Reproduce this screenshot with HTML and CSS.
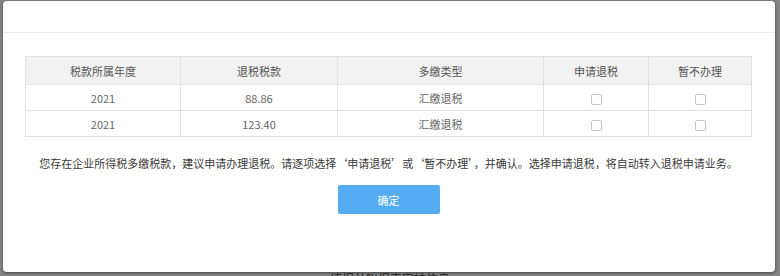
FILE: index.html
```html
<!DOCTYPE html>
<html lang="zh-CN">
<head>
    <meta charset="UTF-8">
    <meta name="viewport" content="width=device-width, initial-scale=1.0">
    <title>退税确认</title>
    <link rel="stylesheet" href="styles.css">
</head>
<body>
    <!-- 背景页面（遮罩下） -->
    <div class="backdrop">
        <div class="modal">
            <div class="modal-header"></div>

            <div class="modal-body">
                <table class="refund-table">
                    <thead>
                        <tr>
                            <th class="col-year">税款所属年度</th>
                            <th class="col-amount">退税税款</th>
                            <th class="col-type">多缴类型</th>
                            <th class="col-check">申请退税</th>
                            <th>暂不办理</th>
                        </tr>
                    </thead>
                    <tbody>
                        <tr>
                            <td>2021</td>
                            <td>88.86</td>
                            <td>汇缴退税</td>
                            <td><span class="checkbox"></span></td>
                            <td><span class="checkbox"></span></td>
                        </tr>
                        <tr>
                            <td>2021</td>
                            <td>123.40</td>
                            <td>汇缴退税</td>
                            <td><span class="checkbox"></span></td>
                            <td><span class="checkbox"></span></td>
                        </tr>
                    </tbody>
                </table>

                <p class="notice">您存在企业所得税多缴税款，建议申请办理退税。请逐项选择‘申请退税’或‘暂不办理’，并确认。选择申请退税，将自动转入退税申请业务。</p>

                <div class="actions">
                    <button type="button" class="btn-ok">确定</button>
                </div>
            </div>
        </div>
        <div class="page-text">填报并附报表审核信息</div>
    </div>
</body>
</html>
```

FILE: styles.css
```css
body {
    margin: 0;
    font-family: "Microsoft YaHei", "Noto Sans CJK SC", "Noto Sans", sans-serif;
    font-size: 11px;
    color: #666;
}

.backdrop {
    width: 780px;
    height: 276px;
    background-color: #848484;
    overflow: hidden;
    padding-top: 1px;
    box-sizing: border-box;
}

.modal {
    margin-left: 3px;
    width: 772px;
    height: 271px;
    background-color: #fff;
    border-radius: 4px;
    box-shadow: 0 1px 3px rgba(0, 0, 0, 0.5);
}

.modal-header {
    height: 31px;
    border-bottom: 1px solid #eaeaea;
}

.modal-body {
    padding: 23px 23px 0 22px;
}

/* 表格 */
.refund-table {
    width: 727px;
    border-collapse: collapse;
    table-layout: fixed;
}

.refund-table th,
.refund-table td {
    border: 1px solid #e2e2e2;
    text-align: center;
    padding: 0;
    font-weight: normal;
}

.refund-table th {
    height: 27px;
    background-color: #f2f2f2;
    color: #555;
}

.refund-table td {
    height: 25px;
    color: #666;
}

.col-year { width: 154px; }
.col-amount { width: 156px; }
.col-type { width: 205px; }
.col-check { width: 104px; }

.checkbox {
    display: inline-block;
    width: 9px;
    height: 9px;
    border: 1px solid #c8c8c8;
    border-radius: 2px;
    vertical-align: middle;
}

.notice {
    margin: 16px 0 0;
    line-height: 20px;
    text-align: center;
    color: #3a3a3a;
}

.actions {
    margin-top: 12px;
    text-align: center;
}

.btn-ok {
    width: 102px;
    height: 29px;
    border: none;
    border-radius: 2px;
    background-color: #55acf3;
    color: #fff;
    font-family: inherit;
    font-size: 11px;
    cursor: pointer;
}

.page-text {
    text-align: center;
    color: #222;
    font-size: 12px;
    line-height: 14px;
}
```
